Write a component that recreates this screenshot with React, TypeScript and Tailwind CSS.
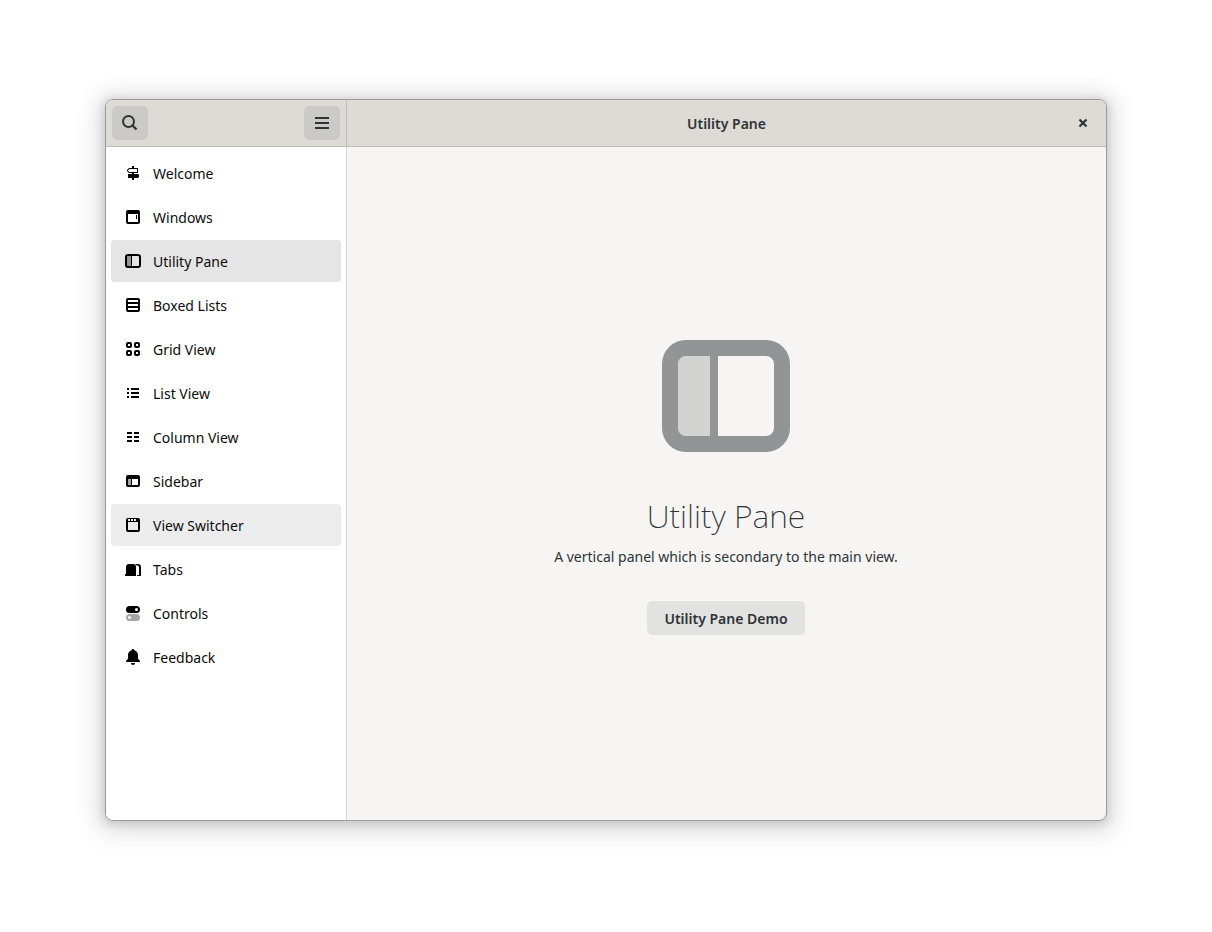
import type { ReactNode } from "react";

type Page = { label: string; icon: ReactNode; state?: "selected" | "hovered" };

function Icon({ children, className = "size-4" }: { children: ReactNode; className?: string }) {
  return (
    <svg viewBox="0 0 16 16" className={`${className} shrink-0`} fill="currentColor" aria-hidden="true">
      {children}
    </svg>
  );
}

const utilityPane = (
  <>
    <path fillRule="evenodd" d="M3 1h10a3 3 0 0 1 3 3v8a3 3 0 0 1-3 3H3a3 3 0 0 1-3-3V4a3 3 0 0 1 3-3zm0 2a1 1 0 0 0-1 1v8a1 1 0 0 0 1 1h3V3zm4 0v10h6a1 1 0 0 0 1-1V4a1 1 0 0 0-1-1z" />
    <path d="M3 3h3v10H3a1 1 0 0 1-1-1V4a1 1 0 0 1 1-1z" opacity=".35" />
  </>
);

const pages: Page[] = [
  {
    label: "Welcome",
    icon: (
      <>
        <path d="M7 1h2v2H7zM7 7h2v2H7zM7 13h2v2H7z" />
        <path fillRule="evenodd" d="M4 3h9v5H4L2 6V5zm.5 1L3 5.200v.6L4.500 7H12V4z" />
        <path d="M3 9h10l1 1v2l-1 1H3z" />
      </>
    ),
  },
  {
    label: "Windows",
    icon: (
      <>
        <path fillRule="evenodd" d="M3 1h10a2 2 0 0 1 2 2v10a2 2 0 0 1-2 2H3a2 2 0 0 1-2-2V3a2 2 0 0 1 2-2zm0 4v8h10V5z" />
        <path d="M11 6h1v4h-1z" />
      </>
    ),
  },
  { label: "Utility Pane", icon: utilityPane, state: "selected" },
  {
    label: "Boxed Lists",
    icon: (
      <path fillRule="evenodd" d="M3 1h10a2 2 0 0 1 2 2v10a2 2 0 0 1-2 2H3a2 2 0 0 1-2-2V3a2 2 0 0 1 2-2zm0 2v2h10V3zm0 4v2h10V7zm0 4v2h10v-2z" />
    ),
  },
  {
    label: "Grid View",
    icon: (
      <g fill="none" stroke="currentColor" strokeWidth="2">
        <rect x="2" y="2" width="4" height="4" rx="1" />
        <rect x="10" y="2" width="4" height="4" rx="1" />
        <rect x="2" y="10" width="4" height="4" rx="1" />
        <rect x="10" y="10" width="4" height="4" rx="1" />
      </g>
    ),
  },
  {
    label: "List View",
    icon: <path d="M2 3h2v2H2zM6 3h8v2H6zM2 7h2v2H2zM6 7h8v2H6zM2 11h2v2H2zM6 11h8v2H6z" />,
  },
  {
    label: "Column View",
    icon: <path d="M2 3h5v2H2zM9 3h5v2H9zM2 7h5v2H2zM9 7h5v2H9zM2 11h5v2H2zM9 11h5v2H9z" />,
  },
  {
    label: "Sidebar",
    icon: (
      <>
        <path fillRule="evenodd" d="M3 2h10a2 2 0 0 1 2 2v8a2 2 0 0 1-2 2H3a2 2 0 0 1-2-2V4a2 2 0 0 1 2-2zm0 4v6h3V6zm4 0v6h6V6z" />
        <path d="M3 6h3v6H3z" opacity=".35" />
      </>
    ),
  },
  {
    label: "View Switcher",
    state: "hovered",
    icon: (
      <path fillRule="evenodd" d="M3 1h10a2 2 0 0 1 2 2v10a2 2 0 0 1-2 2H3a2 2 0 0 1-2-2V3a2 2 0 0 1 2-2zm0 4v8h10V5zm0-3v2h2V2zm3 0v2h2V2zm3 0v2h2V2z" />
    ),
  },
  {
    label: "Tabs",
    icon: (
      <>
        <path d="M4 3h4a3 3 0 0 1 3 3v9H0v-2h1V6a3 3 0 0 1 3-3z" />
        <path d="M10 3h3a3 3 0 0 1 3 3v9h-4v-1h2V6a1.500 1.500 0 0 0-1.500-1.500H11.600z" />
      </>
    ),
  },
  {
    label: "Controls",
    icon: (
      <>
        <path fillRule="evenodd" d="M4.500 1h7a3.500 3.500 0 0 1 0 7h-7a3.500 3.500 0 0 1 0-7zm7 2a1.500 1.500 0 1 0 0 3 1.500 1.500 0 0 0 0-3z" />
        <path fillRule="evenodd" opacity=".35" d="M4.500 9h7a3.500 3.500 0 0 1 0 7h-7a3.500 3.500 0 0 1 0-7zm0 2a1.500 1.500 0 1 0 0 3 1.500 1.500 0 0 0 0-3z" />
      </>
    ),
  },
  {
    label: "Feedback",
    icon: (
      <path d="M8 0a1.500 1.500 0 0 0-1.400 1.300C4.400 1.900 3 3.900 3 6.200V9c0 1-.6 1.700-1.400 2.300-.4.300-.6.700-.6 1.100V13h14v-.6c0-.4-.2-.8-.6-1.100C13.600 10.700 13 10 13 9V6.200c0-2.300-1.400-4.300-3.600-4.900A1.500 1.500 0 0 0 8 0zM6 14a2 2 0 0 0 4 0z" />
    ),
  },
];

const rowStyles = {
  selected: "bg-[#e5e5e5]",
  hovered: "bg-[#ececec]",
  none: "hover:bg-[#ececec]",
};

export default function App() {
  return (
    <div className="flex min-h-screen bg-white px-[105px] pt-[99px] pb-[111px] font-['Noto_Sans',sans-serif] text-sm text-[#2e3436]">
      <div className="flex flex-1 overflow-hidden rounded-lg border border-[#9b9b9b] bg-[#f6f5f3] shadow-[0_2px_8px_2px_rgba(0,0,0,0.13),0_3px_20px_10px_rgba(0,0,0,0.09),0_6px_32px_16px_rgba(0,0,0,0.02)]">
        <aside className="flex w-[241px] shrink-0 flex-col border-r border-[#d5d5d5] bg-white">
          <header className="-mr-px flex h-[47px] items-center justify-between border-r border-b border-[#bfbdba] bg-[#dedbd6] px-1.5">
            <button type="button" aria-label="Search" className="flex h-[34px] w-9 items-center rounded-[5px] bg-[#cccac6] px-2.5">
              <Icon>
                <circle cx="6.500" cy="6.500" r="5.500" fill="none" stroke="currentColor" strokeWidth="2" />
                <path d="M10.500 10.500l4 4" fill="none" stroke="currentColor" strokeWidth="2.400" />
              </Icon>
            </button>
            <button type="button" aria-label="Main menu" className="flex h-[34px] w-9 items-center justify-center rounded-[5px] bg-[#cccac6]">
              <Icon>
                <path d="M1 2h14v2H1zM1 7h14v2H1zM1 12h14v2H1z" />
              </Icon>
            </button>
          </header>
          <nav aria-label="Pages" className="flex flex-col gap-0.5 p-[5px] text-[#0c0c0c]">
            {pages.map((page) => (
              <a
                key={page.label}
                href="#"
                aria-current={page.state === "selected" ? "page" : undefined}
                className={`flex h-[42px] items-center gap-3 rounded px-3.5 ${rowStyles[page.state ?? "none"]}`}
              >
                <span className="text-black">
                  <Icon>{page.icon}</Icon>
                </span>
                <span className="pt-0.5">{page.label}</span>
              </a>
            ))}
          </nav>
        </aside>
        <section className="flex flex-1 flex-col">
          <header className="grid h-[47px] grid-cols-[1fr_auto_1fr] items-center border-b border-[#bfbdba] bg-[#dedbd6] px-[15px]">
            <h2 className="col-start-2 pt-0.5 font-semibold">Utility Pane</h2>
            <button type="button" aria-label="Close" className="justify-self-end">
              <Icon>
                <path d="M4.500 4.500l7 7M11.500 4.500l-7 7" fill="none" stroke="currentColor" strokeWidth="2.200" />
              </Icon>
            </button>
          </header>
          <main className="flex flex-1 flex-col items-center justify-center pr-px">
            <Icon className="size-32 text-[#929595] [&>path:last-child]:opacity-35">{utilityPane}</Icon>
            <h1 className="mt-9 text-[32px] leading-10 font-extralight">Utility Pane</h1>
            <p className="mt-[11px] leading-5">A vertical panel which is secondary to the main view.</p>
            <button type="button" className="mt-[34px] h-[34px] rounded-[5px] bg-[#e2e2e0] px-[17px] pt-0.5 font-semibold">
              Utility Pane Demo
            </button>
          </main>
        </section>
      </div>
    </div>
  );
}
